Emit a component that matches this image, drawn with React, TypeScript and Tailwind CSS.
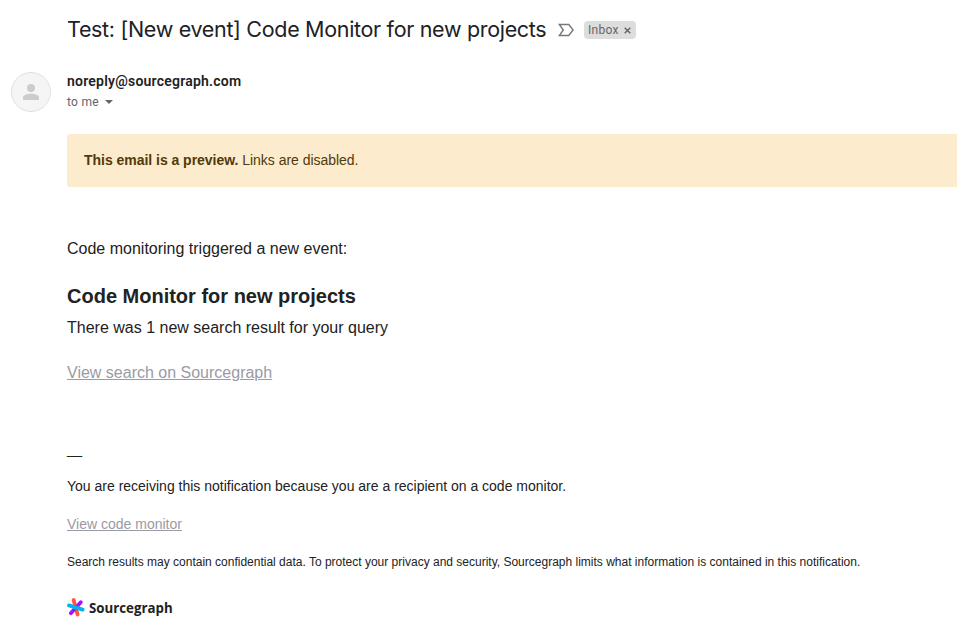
import React from "react";

function ImportanceMarker() {
  return (
    <svg width="18" height="14" viewBox="0 0 18 14" fill="none" stroke="#777" strokeWidth="1.4">
      <path d="M2.3 1.5H11.8L16.1 7L11.8 12.5H2.3L6.3 7Z" />
    </svg>
  );
}

function Avatar() {
  return (
    <div className="flex h-10 w-10 shrink-0 items-center justify-center rounded-full border border-[#e0e0e0] bg-[#f5f5f5]">
      <svg width="16" height="18" viewBox="0 0 16 18" fill="#ccc">
        <circle cx="8" cy="5" r="4" />
        <path d="M0 17V14.5C0 12 4 10.8 8 10.8S16 12 16 14.5V17Z" />
      </svg>
    </div>
  );
}

function SourcegraphMark() {
  return (
    <svg width="18" height="20" viewBox="0 0 18 20" fill="none" strokeWidth="3.8" strokeLinecap="round">
      <path d="M6.6 3L10.6 17.6" stroke="#ff5543" />
      <path d="M13.8 5.2L3.8 16.2" stroke="#a112ff" />
      <path d="M2 8.4L15.6 12.6" stroke="#00b4f2" />
    </svg>
  );
}

export default function App() {
  return (
    <main className="flex h-[637px] w-[957px] flex-col overflow-hidden bg-white pl-[67px] font-['Liberation_Sans',Arial,sans-serif] text-[#222]">
      <header className="flex h-[60px] shrink-0 items-center whitespace-nowrap">
        <h1 className="w-[490px] -translate-y-px font-['Inter',sans-serif] text-[21.5px] leading-7 tracking-[-0.32px] text-[#202124]">Test: [New event] Code Monitor for new projects</h1>
        <ImportanceMarker />
        <span className="ml-[9px] flex h-[18px] w-[52px] items-center rounded bg-[#ddd] pl-1 font-['Roboto',sans-serif] text-xs tracking-[0.3px] text-[#666]">
          Inbox
          <svg className="ml-[5px]" width="7" height="7" viewBox="0 0 7 7" stroke="#666" strokeWidth="1.5"><path d="M.7.7l5.6 5.6M6.3.7L.7 6.3" /></svg>
        </span>
      </header>

      <section className="-ml-14 flex h-[74px] shrink-0 pt-3 font-['Roboto',sans-serif]">
        <Avatar />
        <div className="ml-4">
          <p className="text-sm leading-[18px] font-semibold tracking-[0.22px]">noreply@sourcegraph.com</p>
          <p className="flex items-center pt-[3px] text-xs leading-[18px] tracking-[0.3px] text-[#5f6368]">
            to me
            <svg className="ml-[6px]" width="8" height="4" viewBox="0 0 8 4" fill="#666"><path d="M0 0H8L4 4Z" /></svg>
          </p>
        </div>
      </section>

      <aside className="flex h-[53px] shrink-0 items-center rounded-l-[3px] bg-[#fcebcc] pb-[2px] pl-[17px] text-sm tracking-[-0.03px] text-[#52390b]">
        <p><strong>This email is a preview.</strong> Links are disabled.</p>
      </aside>

      <article className="pt-[50px]">
        <p className="text-base leading-6">Code monitoring triggered a new event:</p>
        <h2 className="pt-5 text-xl leading-[30px] font-bold">Code Monitor for new projects</h2>
        <p className="pt-[5px] text-base leading-6">There was 1 new search result for your query</p>
        <p className="pt-[21px] text-base leading-6"><a className="text-[#999ba5] underline">View search on Sourcegraph</a></p>
      </article>

      <footer className="pt-[54px] text-sm leading-5">
        <p className="tracking-[-0.6px]">__</p>
        <p className="pt-[17px]">You are receiving this notification because you are a recipient on a code monitor.</p>
        <p className="pt-[18px]"><a className="text-[#999ba5] underline">View code monitor</a></p>
        <p className="pt-[18px] text-xs leading-5">Search results may contain confidential data. To protect your privacy and security, Sourcegraph limits what information is contained in this notification.</p>
        <div className="mt-[25px] flex items-center">
          <SourcegraphMark />
          <span className="ml-1 origin-left scale-x-[0.885] font-['Open_Sans',sans-serif] text-[15px] leading-5 font-bold">Sourcegraph</span>
        </div>
      </footer>
    </main>
  );
}
